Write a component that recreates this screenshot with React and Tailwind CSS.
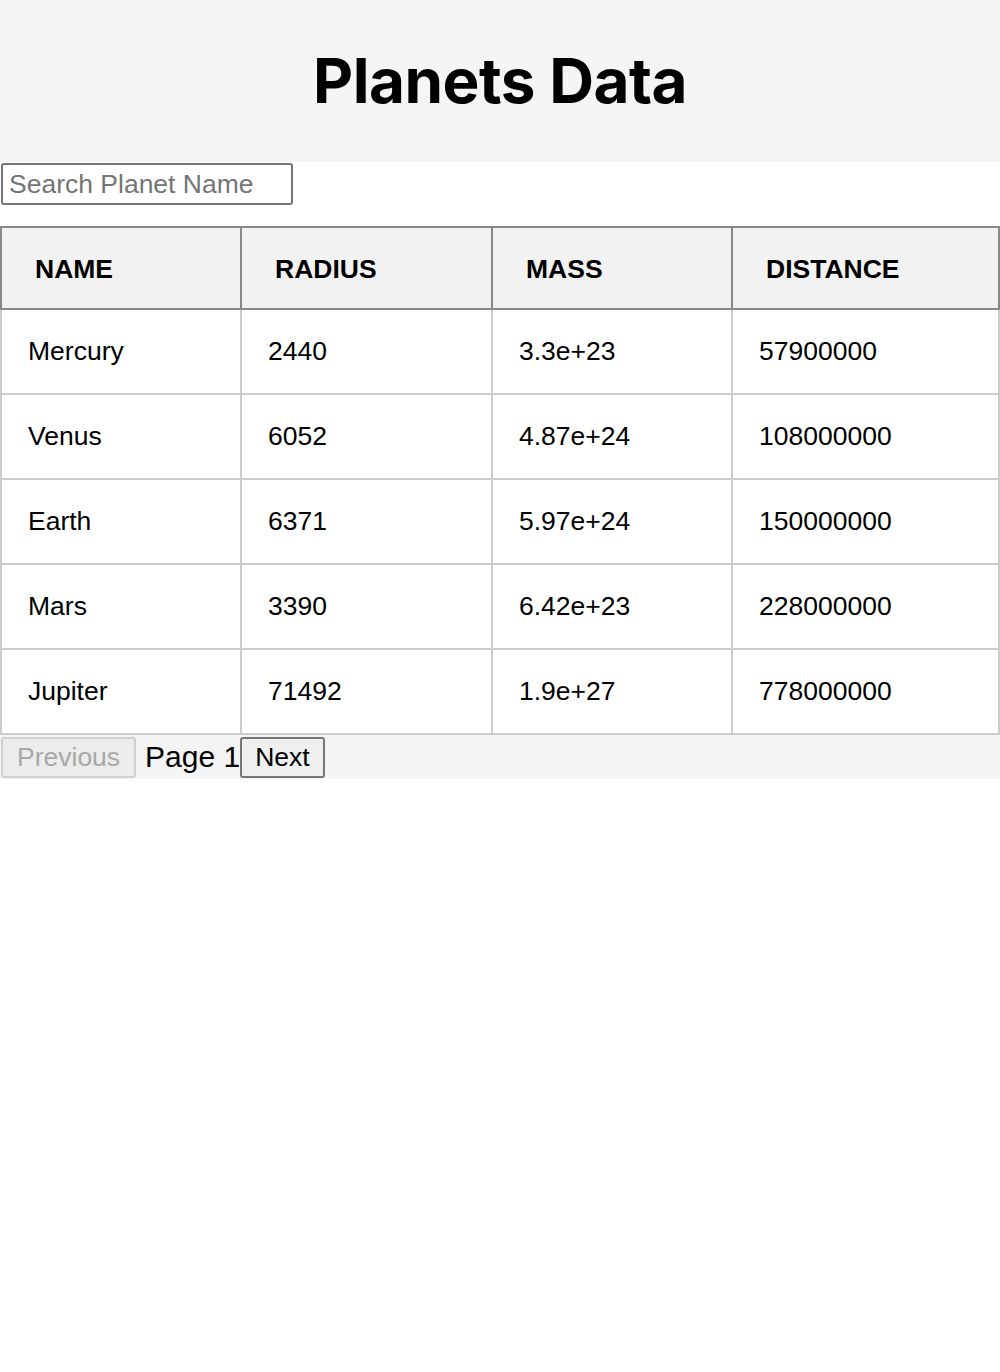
import React, { useState } from 'react';

const planets = [
  { name: 'Mercury', radius: 2440, mass: '3.3e+23', distance: 57900000 },
  { name: 'Venus', radius: 6052, mass: '4.87e+24', distance: 108000000 },
  { name: 'Earth', radius: 6371, mass: '5.97e+24', distance: 150000000 },
  { name: 'Mars', radius: 3390, mass: '6.42e+23', distance: 228000000 },
  { name: 'Jupiter', radius: 71492, mass: '1.9e+27', distance: 778000000 },
];

const App = () => {
  const [query, setQuery] = useState('');
  const rows = planets.filter((p) => p.name.toLowerCase().includes(query.toLowerCase()));

  return (
    <div className="min-h-[1372px] bg-white font-['Liberation_Sans',Arial,sans-serif] text-black">
      <header className="h-[162px] bg-[#f5f5f5] flex items-center justify-center">
        <h1 className="font-['Inter',sans-serif] font-bold text-[62px] leading-none tracking-[-0.5px]">Planets Data</h1>
      </header>

      <div className="pt-px pl-px">
        <input
          value={query}
          onChange={(e) => setQuery(e.target.value)}
          placeholder="Search Planet Name"
          className="w-[292px] h-[42px] border-2 border-[#767676] rounded-[3px] px-[6px] text-[26.5px] placeholder:text-[#757575] outline-none"
        />
      </div>

      <table className="mt-[21px] w-[1000px] border-collapse text-[26.5px]">
        <thead>
          <tr className="bg-[#f2f2f2]">
            <th className="w-[240px] h-[82px] border-2 border-[#888] pl-[33px] pt-[3px] text-left font-bold">NAME</th>
            <th className="w-[251px] h-[82px] border-2 border-[#888] pl-[33px] pt-[3px] text-left font-bold">RADIUS</th>
            <th className="w-[240px] h-[82px] border-2 border-[#888] pl-[33px] pt-[3px] text-left font-bold">MASS</th>
            <th className="h-[82px] border-2 border-[#888] pl-[33px] pt-[3px] text-left font-bold">DISTANCE</th>
          </tr>
        </thead>
        <tbody>
          {rows.map((p) => (
            <tr key={p.name}>
              <td className="h-[85px] border-2 border-[#ccc] pl-[26px]">{p.name}</td>
              <td className="h-[85px] border-2 border-[#ccc] pl-[26px]">{p.radius}</td>
              <td className="h-[85px] border-2 border-[#ccc] pl-[26px]">{p.mass}</td>
              <td className="h-[85px] border-2 border-[#ccc] pl-[26px]">{p.distance}</td>
            </tr>
          ))}
        </tbody>
      </table>

      <div className="h-[44px] bg-[#f4f4f4] flex items-center pl-px">
        <button
          disabled
          className="h-[41px] px-[14px] border-2 border-[#d0d0d0] rounded-[3px] bg-[#ececec] text-[26.5px] leading-none text-[#a8a8a8]"
        >
          Previous
        </button>
        <span className="ml-[9px] text-[30px] leading-none">Page 1</span>
        <button className="h-[41px] px-[13px] border-2 border-[#767676] rounded-[3px] bg-[#efefef] text-[26.5px] leading-none text-black">
          Next
        </button>
      </div>
    </div>
  );
};

export default App;
